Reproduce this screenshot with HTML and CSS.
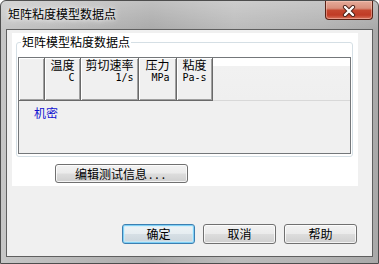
FILE: index.html
```html
<!DOCTYPE html>
<html lang="zh-CN">
<head>
    <meta charset="UTF-8">
    <meta name="viewport" content="width=device-width, initial-scale=1.0">
    <title>矩阵粘度模型数据点</title>
    <link rel="stylesheet" href="styles.css">
</head>
<body>
    <div class="window">
        <div class="titlebar">
            <span class="title">矩阵粘度模型数据点</span>
            <button class="close" title="关闭">
                <svg width="14" height="12" viewBox="0 0 14 12">
                    <path d="M3 2 L11 10 M11 2 L3 10" stroke="#4a2018" stroke-width="4.2" stroke-linecap="round" fill="none"/>
                    <path d="M3 2 L11 10 M11 2 L3 10" stroke="#ffffff" stroke-width="2.4" stroke-linecap="round" fill="none"/>
                </svg>
            </button>
        </div>
        <div class="client">
            <div class="page">
                <fieldset class="group">
                    <legend>矩阵模型粘度数据点</legend>
                    <div class="grid">
                        <div class="grid-head">
                            <div class="hcell col-row"></div>
                            <div class="hcell col-temp"><span class="hlabel">温度<span class="unit">C</span></span></div>
                            <div class="hcell col-shear"><span class="hlabel">剪切速率<span class="unit">1/s</span></span></div>
                            <div class="hcell col-press"><span class="hlabel">压力<span class="unit">MPa</span></span></div>
                            <div class="hcell col-visc"><span class="hlabel">粘度<span class="unit">Pa-s</span></span></div>
                            <div class="hfill"></div>
                        </div>
                        <div class="grid-body">
                            <span class="secret">机密</span>
                        </div>
                    </div>
                </fieldset>
                <button class="btn btn-edit">编辑测试信息<span class="dots">...</span></button>
            </div>
            <div class="footer">
                <button class="btn btn-default">确定</button>
                <button class="btn">取消</button>
                <button class="btn">帮助</button>
            </div>
        </div>
    </div>
</body>
</html>
```

FILE: styles.css
```css
:root {
    --frame-border: #4d4d4d;
    --client-border: #5f5f5f;
    --face: #f0f0f0;
    --shadow: #a0a0a0;
    --dark-shadow: #696969;
    --group-border: #d5dfe5;
    --text-color: #000000;
    --link-blue: #1010d0;
}
html, body {
    margin: 0;
    padding: 0;
}
body {
    width: 379px;
    height: 264px;
    overflow: hidden;
    font-family: "Noto Sans CJK SC", "Noto Sans", sans-serif;
    font-size: 12px;
    color: var(--text-color);
    background-color: #ffffff;
}
.window {
    width: 379px;
    height: 264px;
    box-sizing: border-box;
    border: 1px solid var(--frame-border);
    border-radius: 6px 6px 0 0;
    padding: 0 5px 6px 5px;
    display: flex;
    flex-direction: column;
    background:
        linear-gradient(180deg, rgba(255,255,255,0.25) 0, rgba(255,255,255,0) 28px),
        linear-gradient(90deg, #c6c6c6 0, #ababab 40%, #bcbcbc 62%, #b3b3b3 85%, #a9a9a9 100%);
}
.titlebar {
    height: 28px;
    display: flex;
    justify-content: space-between;
    align-items: flex-start;
}
.title {
    padding: 6px 0 0 2px;
    line-height: 14px;
    font-size: 12px;
    text-shadow: 0 0 4px #ffffff, 0 0 8px rgba(255,255,255,0.8);
}
.close {
    width: 48px;
    height: 19px;
    margin: 0;
    padding: 0;
    border: 1px solid #5a2216;
    border-top: none;
    border-radius: 0 0 4px 4px;
    display: flex;
    align-items: center;
    justify-content: center;
    background: linear-gradient(180deg, #e5ab9a 0, #d98f7c 40%, #c5472f 52%, #c03b25 78%, #d8735c 100%);
    box-shadow: inset 0 0 0 1px rgba(255,210,200,0.45);
}
.close svg {
    display: block;
    margin-top: 1px;
}
.client {
    flex: 1;
    border: 1px solid var(--client-border);
    background-color: var(--face);
    display: flex;
    flex-direction: column;
}
.page {
    margin: 3px 14px 0 5px;
    height: 153px;
    box-sizing: border-box;
    padding-top: 2px;
    background-color: #ffffff;
}
.group {
    width: 337px;
    box-sizing: border-box;
    margin: 0 0 0 4px;
    padding: 8px 1px 2px 1px;
    border: 1px solid var(--group-border);
    border-radius: 3px;
}
.group legend {
    margin-left: 3px;
    padding: 0 1px;
    line-height: 14px;
    font-size: 12px;
}
.grid {
    height: 97px;
    box-sizing: border-box;
    border: 1px solid #74777a;
    display: flex;
    flex-direction: column;
}
.grid-head {
    height: 43px;
    display: flex;
}
.hcell {
    box-sizing: border-box;
    height: 43px;
    background-color: var(--face);
    border-right: 1px solid var(--dark-shadow);
    border-bottom: 1px solid var(--dark-shadow);
    box-shadow: inset 1px 1px #ffffff, inset -1px -1px var(--shadow);
    text-align: center;
}
.col-row { width: 26px; }
.col-temp { width: 36px; }
.col-shear { width: 58px; }
.col-press { width: 38px; }
.col-visc { width: 36px; }
.hlabel {
    display: inline-block;
    text-align: right;
    line-height: 14px;
    margin-top: 0;
}
.unit {
    display: block;
    font-family: "DejaVu Sans Mono", "Liberation Mono", monospace;
    font-size: 10px;
    line-height: 11px;
}
.hfill {
    flex: 1;
    box-sizing: border-box;
    border-bottom: 1px solid #d8d8d8;
    background: linear-gradient(180deg, #ffffff 0, #ffffff 8px, #f1f1f1 8px, #efefef 100%);
}
.grid-body {
    flex: 1;
    background-color: var(--face);
    padding: 5px 0 0 15px;
    line-height: 14px;
}
.secret {
    color: var(--link-blue);
}
.btn {
    box-sizing: border-box;
    width: 73px;
    height: 20px;
    margin: 0;
    padding: 0;
    font-family: "Noto Sans CJK SC", "Noto Sans", sans-serif;
    font-size: 12px;
    line-height: 16px;
    color: #000000;
    border: 1px solid #707070;
    border-radius: 3px;
    background: linear-gradient(180deg, #f2f2f2 0, #ebebeb 48%, #dddddd 52%, #cfcfcf 100%);
    box-shadow: inset 0 0 0 1px rgba(255,255,255,0.75);
}
.btn-edit {
    display: block;
    width: 133px;
    height: 19px;
    margin: 7px 0 0 43px;
    line-height: 15px;
}
.dots {
    letter-spacing: 3px;
    margin-left: 2px;
}
.btn-default {
    border-color: #3c7fb1;
    background: linear-gradient(180deg, #eef3f6 0, #e6edf1 48%, #d6dfe5 52%, #cbd5dc 100%);
    box-shadow: inset 0 0 0 1px #7fd0f6, inset 0 0 0 2px rgba(200,236,252,0.6);
}
.footer {
    margin-top: auto;
    display: flex;
    justify-content: flex-end;
    gap: 8px;
    padding: 0 15px 12px 0;
}
```
